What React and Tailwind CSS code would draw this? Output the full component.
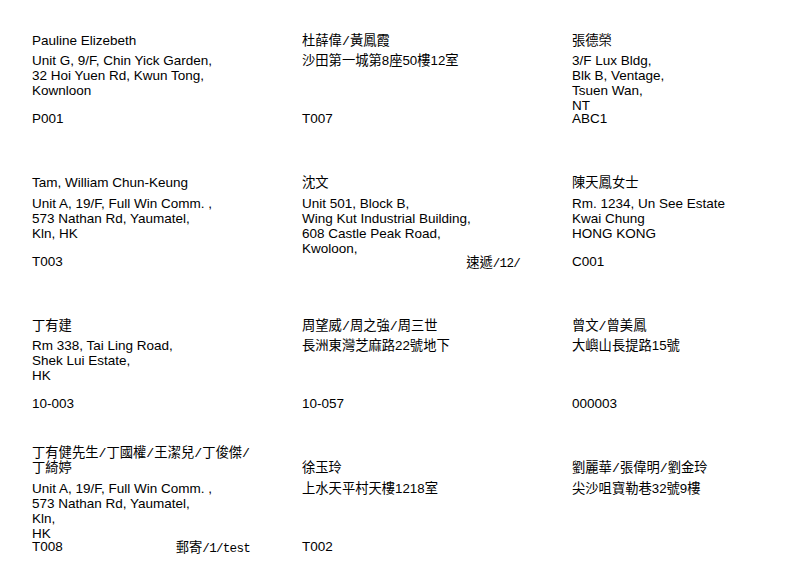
import React from "react";

const CJK = /[\u3400-\u9fff]/;

function T({ s }) {
  if (!CJK.test(s)) return <span className="text-[13.5px]">{s}</span>;
  const parts = s.split(/(\/)/);
  return (
    <span className="text-[13.3px] font-['Liberation_Sans','Noto_Sans_CJK_TC',sans-serif]">
      {parts.map((p, i) =>
        p === "/" ? (
          <span key={i} className="font-['Liberation_Mono','Noto_Sans_CJK_TC',monospace]">/</span>
        ) : (
          <React.Fragment key={i}>{p}</React.Fragment>
        )
      )}
    </span>
  );
}

function Tag({ cjk, mono }) {
  return (
    <span className="whitespace-nowrap">
      <span className="text-[13.3px] font-['Noto_Sans_CJK_TC',sans-serif]">{cjk}</span>
      <span className="text-[12.6px] tracking-[-0.75px] font-['Liberation_Mono',monospace]">{mono}</span>
    </span>
  );
}

const labels = [
  { name: ["Pauline Elizebeth"], addr: ["Unit G, 9/F, Chin Yick Garden,", "32 Hoi Yuen Rd, Kwun Tong,", "Kownloon"], code: "P001" },
  { name: ["杜薛偉/黃鳳霞"], addr: ["沙田第一城第8座50樓12室"], code: "T007" },
  { name: ["張德榮"], addr: ["3/F Lux Bldg,", "Blk B, Ventage,", "Tsuen Wan,", "NT"], code: "ABC1" },
  { name: ["Tam, William Chun-Keung"], addr: ["Unit A, 19/F, Full Win Comm. ,", "573 Nathan Rd, Yaumatel,", "Kln, HK"], code: "T003" },
  { name: ["沈文"], addr: ["Unit 501, Block B,", "Wing Kut Industrial Building,", "608 Castle Peak Road,", "Kwoloon,"], code: "", tag: ["速遞", "/12/"] },
  { name: ["陳天鳳女士"], addr: ["Rm. 1234, Un See Estate", "Kwai Chung", "HONG KONG"], code: "C001" },
  { name: ["丁有建"], addr: ["Rm 338, Tai Ling Road,", "Shek Lui Estate,", "HK"], code: "10-003" },
  { name: ["周望威/周之強/周三世"], addr: ["長洲東灣芝麻路22號地下"], code: "10-057" },
  { name: ["曾文/曾美鳳"], addr: ["大嶼山長提路15號"], code: "000003" },
  { name: ["丁有健先生/丁國權/王潔兒/丁俊傑/", "丁綺婷"], addr: ["Unit A, 19/F, Full Win Comm. ,", "573 Nathan Rd, Yaumatel,", "Kln,", "HK"], code: "T008", tag: ["郵寄", "/1/test"] },
  { name: ["徐玉玲"], addr: ["上水天平村天樓1218室"], code: "T002" },
  { name: ["劉麗華/張偉明/劉金玲"], addr: ["尖沙咀寶勒巷32號9樓"], code: "" },
];

function Label({ l }) {
  return (
    <div className="flex flex-col">
      <div className="h-[30px] flex flex-col justify-end">
        {l.name.map((n, i) => (
          <div key={i} className="h-[15px] leading-[15px] whitespace-nowrap">
            <T s={n} />
          </div>
        ))}
      </div>
      <div className="mt-[5.3px] h-[59px] flex flex-col">
        {l.addr.map((a, i) => (
          <div key={i} className="h-[15px] leading-[15px] whitespace-nowrap">
            <T s={a} />
          </div>
        ))}
      </div>
      <div className="w-[218px] h-[15px] leading-[15px] flex justify-between">
        <span className="text-[13.5px]">{l.code}</span>
        {l.tag ? <Tag cjk={l.tag[0]} mono={l.tag[1]} /> : null}
      </div>
    </div>
  );
}

export default function App() {
  return (
    <div className="w-[800px] h-[570px] overflow-hidden bg-white text-black font-['Liberation_Sans','Noto_Sans_CJK_TC',sans-serif]">
      <div className="pl-[32px] pt-[16.8px] grid grid-cols-[270px_270px_270px] auto-rows-[142.5px]">
        {labels.map((l, i) => (
          <Label key={i} l={l} />
        ))}
      </div>
    </div>
  );
}
